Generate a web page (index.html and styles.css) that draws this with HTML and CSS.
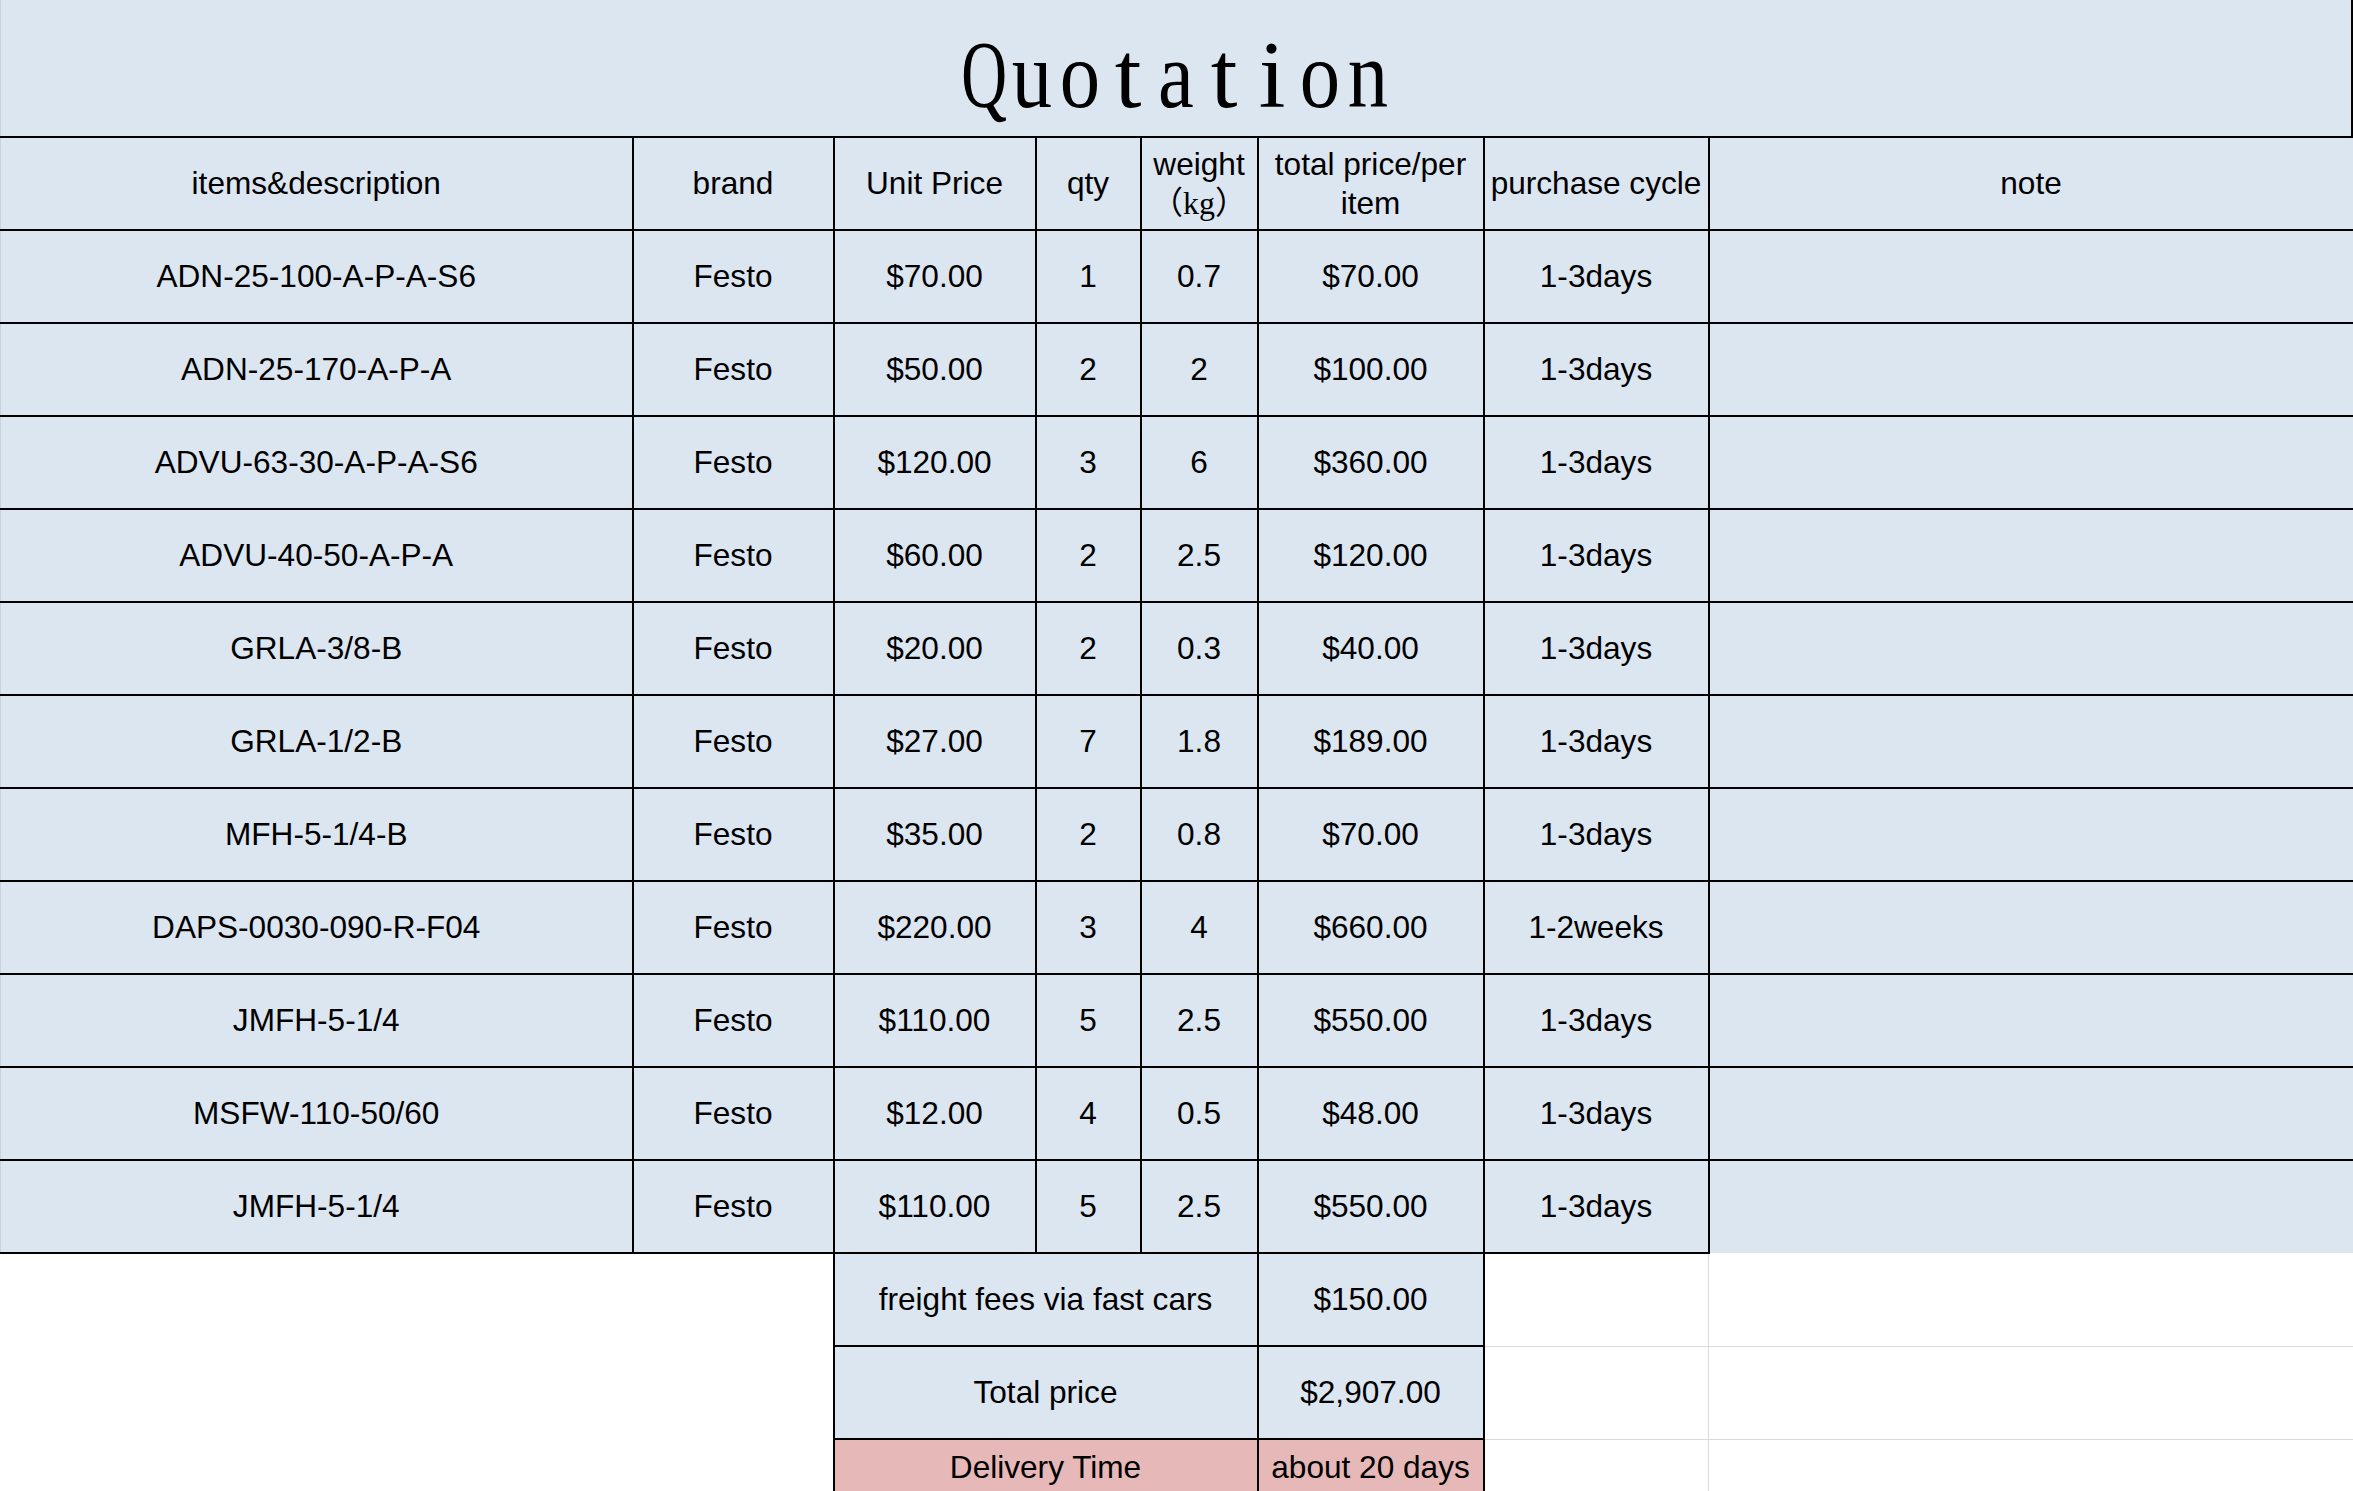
FILE: index.html
```html
<!DOCTYPE html>
<html lang="en">
<head>
<meta charset="utf-8">
<title>Quotation</title>
<link rel="stylesheet" href="styles.css">
</head>
<body>
<div class="sheet">
  <div class="title"><span class="ch q">Q</span><span class="ch">u</span><span class="ch">o</span><span class="ch t">t</span><span class="ch">a</span><span class="ch t">t</span><span class="ch t">i</span><span class="ch">o</span><span class="ch">n</span></div>
  <table class="quote">
    <colgroup>
      <col class="w-items"><col class="w-brand"><col class="w-unit"><col class="w-qty"><col class="w-weight"><col class="w-total"><col class="w-cycle"><col class="w-note">
    </colgroup>
    <tbody>
      <tr class="row">
        <td class="c first">items&amp;description</td>
        <td class="c">brand</td>
        <td class="c">Unit Price</td>
        <td class="c">qty</td>
        <td class="c two"><span class="line">weight</span><span class="line unit">（kg）</span></td>
        <td class="c two"><span class="line">total price/per</span><span class="line">item</span></td>
        <td class="c">purchase cycle</td>
        <td class="c">note</td>
      </tr>
      <tr class="row"><td class="c first">ADN-25-100-A-P-A-S6</td><td class="c">Festo</td><td class="c">$70.00</td><td class="c">1</td><td class="c">0.7</td><td class="c">$70.00</td><td class="c">1-3days</td><td class="c"></td></tr>
      <tr class="row"><td class="c first">ADN-25-170-A-P-A</td><td class="c">Festo</td><td class="c">$50.00</td><td class="c">2</td><td class="c">2</td><td class="c">$100.00</td><td class="c">1-3days</td><td class="c"></td></tr>
      <tr class="row"><td class="c first">ADVU-63-30-A-P-A-S6</td><td class="c">Festo</td><td class="c">$120.00</td><td class="c">3</td><td class="c">6</td><td class="c">$360.00</td><td class="c">1-3days</td><td class="c"></td></tr>
      <tr class="row"><td class="c first">ADVU-40-50-A-P-A</td><td class="c">Festo</td><td class="c">$60.00</td><td class="c">2</td><td class="c">2.5</td><td class="c">$120.00</td><td class="c">1-3days</td><td class="c"></td></tr>
      <tr class="row"><td class="c first">GRLA-3/8-B</td><td class="c">Festo</td><td class="c">$20.00</td><td class="c">2</td><td class="c">0.3</td><td class="c">$40.00</td><td class="c">1-3days</td><td class="c"></td></tr>
      <tr class="row"><td class="c first">GRLA-1/2-B</td><td class="c">Festo</td><td class="c">$27.00</td><td class="c">7</td><td class="c">1.8</td><td class="c">$189.00</td><td class="c">1-3days</td><td class="c"></td></tr>
      <tr class="row"><td class="c first">MFH-5-1/4-B</td><td class="c">Festo</td><td class="c">$35.00</td><td class="c">2</td><td class="c">0.8</td><td class="c">$70.00</td><td class="c">1-3days</td><td class="c"></td></tr>
      <tr class="row"><td class="c first">DAPS-0030-090-R-F04</td><td class="c">Festo</td><td class="c">$220.00</td><td class="c">3</td><td class="c">4</td><td class="c">$660.00</td><td class="c">1-2weeks</td><td class="c"></td></tr>
      <tr class="row"><td class="c first">JMFH-5-1/4</td><td class="c">Festo</td><td class="c">$110.00</td><td class="c">5</td><td class="c">2.5</td><td class="c">$550.00</td><td class="c">1-3days</td><td class="c"></td></tr>
      <tr class="row"><td class="c first">MSFW-110-50/60</td><td class="c">Festo</td><td class="c">$12.00</td><td class="c">4</td><td class="c">0.5</td><td class="c">$48.00</td><td class="c">1-3days</td><td class="c"></td></tr>
      <tr class="row"><td class="c first">JMFH-5-1/4</td><td class="c">Festo</td><td class="c">$110.00</td><td class="c">5</td><td class="c">2.5</td><td class="c">$550.00</td><td class="c">1-3days</td><td class="c open"></td></tr>
      <tr class="row">
        <td class="blank" colspan="2"></td>
        <td class="c" colspan="3">freight fees via fast cars</td>
        <td class="c">$150.00</td>
        <td class="grid"></td>
        <td class="grid notop"></td>
      </tr>
      <tr class="row">
        <td class="blank" colspan="2"></td>
        <td class="c" colspan="3">Total price</td>
        <td class="c">$2,907.00</td>
        <td class="grid"></td>
        <td class="grid"></td>
      </tr>
      <tr class="row short">
        <td class="blank" colspan="2"></td>
        <td class="c pink" colspan="3">Delivery Time</td>
        <td class="c pink">about 20 days</td>
        <td class="grid"></td>
        <td class="grid"></td>
      </tr>
    </tbody>
  </table>
</div>
</body>
</html>
```

FILE: styles.css
```css
html, body {
  margin: 0;
  padding: 0;
  background: #ffffff;
}

.sheet {
  width: 2353px;
}

.title {
  box-sizing: border-box;
  height: 136px;
  padding-top: 27px;
  background: #dce6f1;
  border-right: 2px solid #000;
  border-left: 1px solid #c9d3de;
  display: flex;
  justify-content: center;
  font-family: "Liberation Serif", "Times New Roman", serif;
  font-size: 96px;
  line-height: 96px;
  color: #000;
}

.ch {
  display: inline-flex;
  justify-content: center;
  width: 48px;
  transform: scaleX(0.84);
}

.ch.q {
  transform: scaleX(0.66);
}

.ch.t {
  transform: none;
}

.quote {
  border-collapse: collapse;
  table-layout: fixed;
  width: 2353px;
  font-family: "Liberation Sans", Arial, sans-serif;
  font-size: 31.6px;
  color: #000;
}

.w-items { width: 632px; }
.w-brand { width: 201px; }
.w-unit { width: 202px; }
.w-qty { width: 105px; }
.w-weight { width: 117px; }
.w-total { width: 226px; }
.w-cycle { width: 225px; }
.w-note { width: 645px; }

.row { height: 93px; }
.row.short { height: 56px; }

.quote td {
  padding: 0;
  text-align: center;
  vertical-align: middle;
  white-space: nowrap;
  overflow: hidden;
}

.c {
  background: #dce6f1;
  border: 2px solid #000;
}

.c.first {
  border-left: 1px solid #c9d3de;
}

.c.open {
  border-right: none;
  border-bottom: none;
}

.c.pink {
  background: #e6b8b7;
}

.two .line {
  display: block;
  line-height: 39px;
}

.two .unit {
  font-family: "Liberation Serif", "Noto Sans CJK SC", serif;
  font-size: 32px;
}

.blank {
  background: #ffffff;
  border: none;
}

.grid {
  background: #ffffff;
  border: 1px solid #dadada;
  border-right: none;
}

.grid.notop {
  border-top: none;
}
```
